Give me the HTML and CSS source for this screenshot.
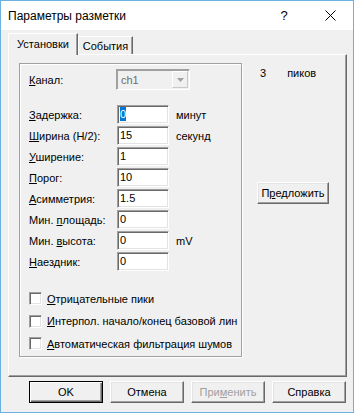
FILE: index.html
```html
<!DOCTYPE html>
<html lang="ru">
<head>
<meta charset="utf-8">
<title>Параметры разметки</title>
<link rel="stylesheet" href="styles.css">
</head>
<body>
<div class="window">
  <div class="titlebar">
    <span class="title">Параметры разметки</span>
    <span class="capbtn help">?</span>
    <span class="capbtn close"><svg width="11" height="11" viewBox="0 0 11 11"><path d="M0.5 0.5 L10.5 10.5 M10.5 0.5 L0.5 10.5" stroke="#000" stroke-width="1" fill="none"/></svg></span>
  </div>
  <div class="client">
    <div class="tabs">
      <div class="tab active">Установки</div>
      <div class="tab">События</div>
    </div>
    <div class="panel">
      <div class="group">
        <div class="channel">
          <span class="lbl"><u>К</u>анал:</span>
          <div class="combo"><span>ch1</span><span class="arrow"><svg width="7" height="4" viewBox="0 0 7 4"><path d="M0 0 H7 L3.5 4 Z" fill="#a0a0a0"/></svg></span></div>
        </div>
        <div class="form">
          <span class="lbl"><u>З</u>адержка:</span><div class="edit"><span class="sel">0</span></div><span class="unit">минут</span>
          <span class="lbl"><u>Ш</u>ирина (H/2):</span><div class="edit">15</div><span class="unit">секунд</span>
          <span class="lbl"><u>У</u>ширение:</span><div class="edit">1</div><span></span>
          <span class="lbl"><u>П</u>орог:</span><div class="edit">10</div><span></span>
          <span class="lbl"><u>А</u>симметрия:</span><div class="edit">1.5</div><span></span>
          <span class="lbl">Мин. <u>п</u>лощадь:</span><div class="edit">0</div><span></span>
          <span class="lbl">Мин. <u>в</u>ысота:</span><div class="edit">0</div><span class="unit">mV</span>
          <span class="lbl"><u>Н</u>аездник:</span><div class="edit">0</div><span></span>
        </div>
        <div class="checks">
          <div class="check"><span class="box"></span><span><u>О</u>трицательные пики</span></div>
          <div class="check"><span class="box"></span><span><u>И</u>нтерпол. начало/конец базовой лин</span></div>
          <div class="check"><span class="box"></span><span><u>А</u>втоматическая фильтрация шумов</span></div>
        </div>
      </div>
      <div class="side">
        <div class="count"><span class="num">3</span><span class="peaks">пиков</span></div>
        <div class="btn suggest">П<u>р</u>едложить</div>
      </div>
    </div>
    <div class="buttons">
      <div class="btn default">OK</div>
      <div class="btn">Отмена</div>
      <div class="btn disabled">При<u>м</u>енить</div>
      <div class="btn">Справка</div>
    </div>
  </div>
</div>
</body>
</html>
```
FILE: styles.css
```css
html, body {
  margin: 0;
  padding: 0;
  background: #f0f0f0;
}
body {
  font-family: "Liberation Sans", Arial, sans-serif;
  font-size: 11px;
  color: #000;
}
u {
  text-decoration: underline;
  text-underline-offset: 1px;
}
.window {
  width: 354px;
  height: 413px;
  box-sizing: border-box;
  border: 1px solid #6cb2e0;
  background: #f0f0f0;
  display: flex;
  flex-direction: column;
}
.titlebar {
  height: 29px;
  flex: none;
  background: #fff;
  display: flex;
  align-items: center;
}
.title {
  flex: 1;
  margin-left: 7px;
  font-size: 12px;
}
.capbtn {
  width: 46px;
  height: 29px;
  display: flex;
  align-items: center;
  justify-content: center;
}
.help {
  font-size: 13px;
}
.client {
  padding: 3px 6px 0 7px;
}
.tabs {
  display: flex;
  align-items: flex-end;
  height: 21px;
}
.tab {
  box-sizing: border-box;
  height: 18px;
  border-left: 1px solid #fff;
  border-top: 1px solid #fff;
  border-right: 1px solid #696969;
  box-shadow: inset -1px 0 #a0a0a0;
  display: flex;
  align-items: center;
  justify-content: center;
  background: #f0f0f0;
}
.tab.active {
  width: 70px;
  height: 22px;
  margin-bottom: -1px;
  position: relative;
  z-index: 1;
  padding-bottom: 2px;
}
.tab:not(.active) {
  width: 55px;
  padding-top: 1px;
}
.panel {
  height: 323px;
  box-sizing: border-box;
  border-left: 1px solid #fff;
  border-top: 1px solid #fff;
  border-right: 1px solid #696969;
  border-bottom: 1px solid #696969;
  box-shadow: inset -1px -1px #a0a0a0;
  display: flex;
  align-items: flex-start;
}
.group {
  margin: 8px 0 0 10px;
  width: 223px;
  height: 294px;
  box-sizing: border-box;
  border: 1px solid #a0a0a0;
  box-shadow: inset 1px 1px #fff, 1px 1px #fff;
  padding: 5px 0 0 9px;
}
.channel {
  display: grid;
  grid-template-columns: 87px 74px;
  align-items: center;
  height: 21px;
}
.combo {
  height: 21px;
  box-sizing: border-box;
  border: 1px solid;
  border-color: #a0a0a0 #fff #fff #a0a0a0;
  box-shadow: inset 1px 1px #a0a0a0;
  background: #f0f0f0;
  color: #6d6d6d;
  display: flex;
  align-items: center;
  padding: 0 1px 0 4px;
}
.arrow {
  margin-left: auto;
  width: 16px;
  height: 17px;
  box-sizing: border-box;
  border: 1px solid;
  border-color: #fff #c8c8c8 #c8c8c8 #fff;
  display: flex;
  align-items: center;
  justify-content: center;
}
.form {
  margin-top: 15px;
  display: grid;
  grid-template-columns: 88px 52px auto;
  grid-auto-rows: 19px;
  row-gap: 2px;
  align-items: center;
}
.edit {
  height: 19px;
  box-sizing: border-box;
  background: #fff;
  border: 1px solid;
  border-color: #a0a0a0 #fff #fff #a0a0a0;
  box-shadow: inset 1px 1px #696969, inset -1px -1px #e3e3e3;
  padding-left: 2px;
  line-height: 17px;
}
.sel {
  background: #0078d7;
  color: #fff;
  display: inline-block;
  line-height: 14px;
  vertical-align: middle;
  margin-top: -2px;
}
.unit {
  margin-left: 7px;
}
.checks {
  margin-top: 21px;
  display: flex;
  flex-direction: column;
  gap: 9.5px;
}
.check {
  display: flex;
  align-items: center;
  height: 13px;
}
.box {
  width: 13px;
  height: 13px;
  box-sizing: border-box;
  background: #fff;
  border: 1px solid;
  border-color: #a0a0a0 #fff #fff #a0a0a0;
  box-shadow: inset 1px 1px #696969, inset -1px -1px #e3e3e3;
  margin-right: 5px;
  flex: none;
}
.side {
  margin-left: 15px;
  padding-top: 12px;
}
.count {
  display: flex;
  line-height: 13px;
  padding-left: 3px;
}
.peaks {
  margin-left: 21px;
}
.btn {
  box-sizing: border-box;
  width: 74px;
  height: 22px;
  background: #f0f0f0;
  border: 1px solid;
  border-color: #fff #696969 #696969 #fff;
  box-shadow: inset -1px -1px #a0a0a0, inset 1px 1px #e3e3e3;
  display: flex;
  align-items: center;
  justify-content: center;
}
.suggest {
  width: 72px;
  margin-top: 102px;
}
.buttons {
  display: flex;
  gap: 7px;
  margin: 4px 0 0 21px;
}
.btn.default {
  border-color: #000;
  box-shadow: inset 1px 1px #fff, inset -1px -1px #696969, inset -2px -2px #a0a0a0;
}
.btn.disabled {
  color: #a0a0a0;
}
```
